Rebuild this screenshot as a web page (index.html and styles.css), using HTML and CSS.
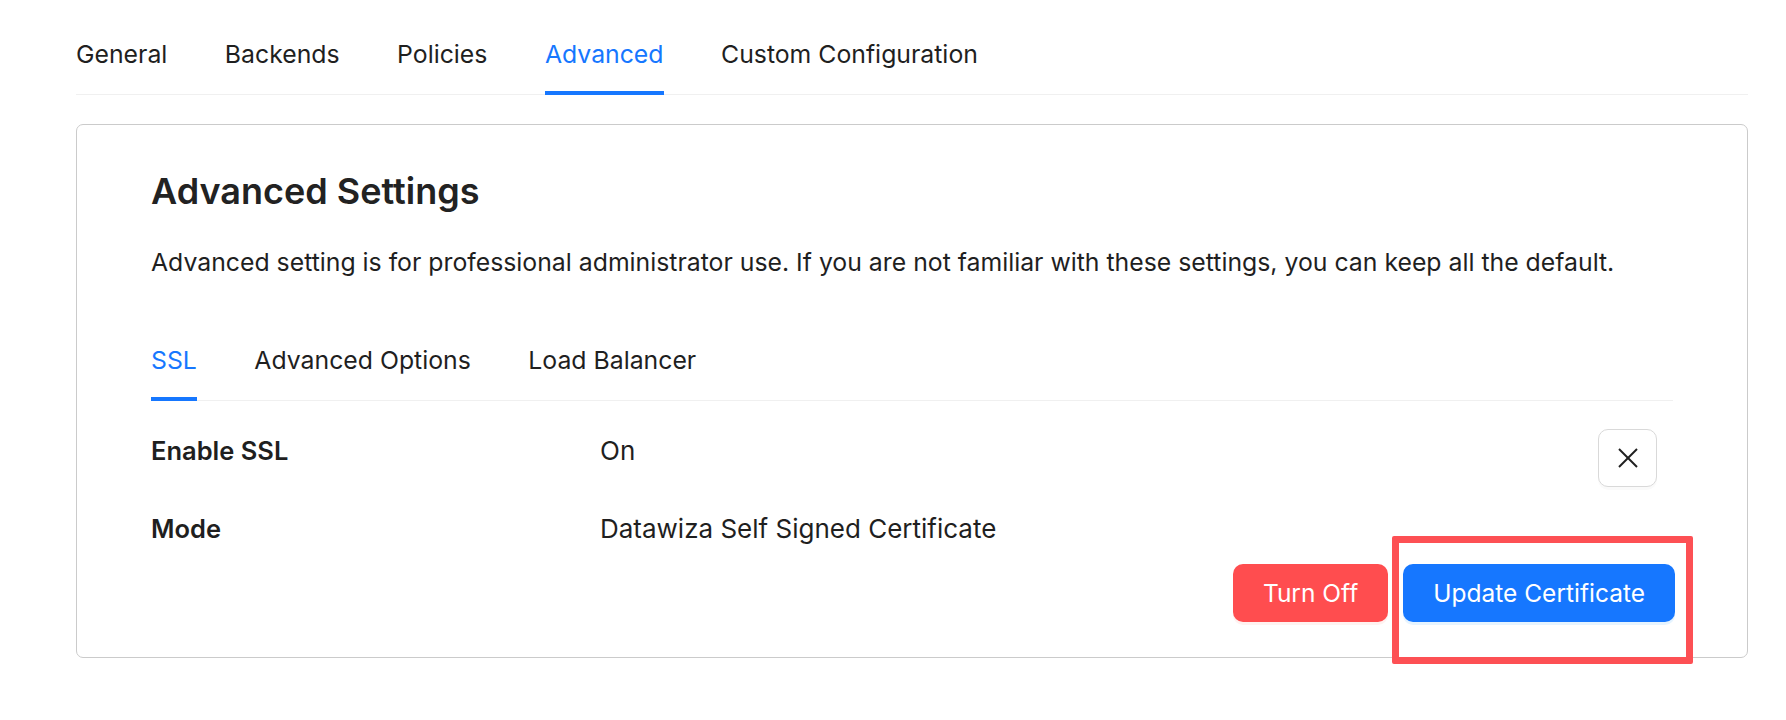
FILE: index.html
```html
<!DOCTYPE html>
<html lang="en">
<head>
  <meta charset="UTF-8" />
  <meta name="viewport" content="width=device-width, initial-scale=1.0"/>
  <title>Application - Advanced</title>
  <link rel="stylesheet" href="styles.css">
</head>
<body>
  <div class="page">
    <nav class="tabs" aria-label="Application sections">
      <a class="tab">General</a>
      <a class="tab">Backends</a>
      <a class="tab">Policies</a>
      <a class="tab active">Advanced</a>
      <a class="tab">Custom Configuration</a>
    </nav>

    <section class="card">
      <h2>Advanced Settings</h2>
      <p class="desc">Advanced setting is for professional administrator use. If you are not familiar with these settings, you can keep all the default.</p>

      <nav class="tabs inner-tabs" aria-label="Advanced sections">
        <a class="tab active">SSL</a>
        <a class="tab">Advanced Options</a>
        <a class="tab">Load Balancer</a>
      </nav>

      <div class="rows">
        <div class="row first">
          <span class="label">Enable SSL</span>
          <span class="value">On</span>
          <button class="btn icon-btn" aria-label="Close">
            <svg width="20" height="20" viewBox="0 0 20 20" fill="none" stroke="#1f1f1f" stroke-width="2">
              <line x1="1" y1="1" x2="19" y2="19" />
              <line x1="19" y1="1" x2="1" y2="19" />
            </svg>
          </button>
        </div>
        <div class="row">
          <span class="label">Mode</span>
          <span class="value">Datawiza Self Signed Certificate</span>
        </div>
      </div>

      <div class="actions">
        <button class="btn danger">Turn Off</button>
        <span class="marked">
          <button class="btn primary">Update Certificate</button>
        </span>
      </div>
    </section>
  </div>
</body>
</html>
```

FILE: styles.css
```css
:root {
  --primary: #1677ff; --danger: #ff4d4f; --text: #1f1f1f;
  --split: #f0f0f0; --border: #d9d9d9; --card-border: #cbcbcb; --mark: #fd5054;
}
* { box-sizing: border-box; }
body { margin: 0; background: #fff; color: var(--text); font-family: 'Inter', 'Noto Sans', sans-serif; font-size: 25px; }
.page { padding: 0 38px 62px 76px; }

/* Tabs */
.tabs { display: flex; gap: 57.5px; border-bottom: 1px solid var(--split); }
.tab { padding: 35px 0 18px; font-size: 24.8px; line-height: 38px; border-bottom: 4px solid transparent; margin-bottom: -1px; cursor: pointer; color: var(--text); }
.tab.active { color: var(--primary); border-bottom-color: var(--primary); }
.inner-tabs { margin-top: 39px; }
.inner-tabs .tab { padding-top: 21px; padding-bottom: 18px; }

/* Card */
.card { margin-top: 29px; border: 1px solid var(--card-border); border-radius: 7px; padding: 43px 74px 35px; }
.card h2 { margin: 0; font-size: 36px; font-weight: 600; line-height: 47px; color: #222; }
.desc { margin: 28px 0 0; line-height: 38px; font-size: 24.8px; }

/* Setting rows */
.rows { margin-top: 28px; }
.row { display: grid; grid-template-columns: 449px 1fr auto; align-items: start; line-height: 38px; }
.row .label { font-weight: 600; font-size: 25.5px; }
.row .value { font-size: 26px; }
.row.first .label, .row.first .value { padding-top: 3px; }
.row + .row { margin-top: 23px; }

/* Buttons */
.btn { font-family: inherit; font-size: 24.5px; height: 58px; border-radius: 10px; padding: 0 29px; border: 1px solid transparent; cursor: pointer; line-height: 1; }
.icon-btn { width: 59px; padding: 0; margin-right: 16px; background: #fff; border-color: var(--border); box-shadow: 0 3px 0 rgba(0,0,0,0.02); display: flex; align-items: center; justify-content: center; }
.danger { background: var(--danger); color: #fff; box-shadow: 0 3px 0 rgba(255,38,5,0.06); }
.primary { background: var(--primary); color: #fff; box-shadow: 0 3px 0 rgba(5,145,255,0.1); }
.actions { display: flex; justify-content: flex-end; gap: 15px; margin-top: 16px; margin-right: -2px; }

/* Highlight frame around the update button */
.marked { position: relative; display: inline-flex; }
.marked::after { content: ""; position: absolute; top: -28px; left: -11px; right: -18px; bottom: -42px; border: 7px solid var(--mark); border-radius: 2px; pointer-events: none; }
```
